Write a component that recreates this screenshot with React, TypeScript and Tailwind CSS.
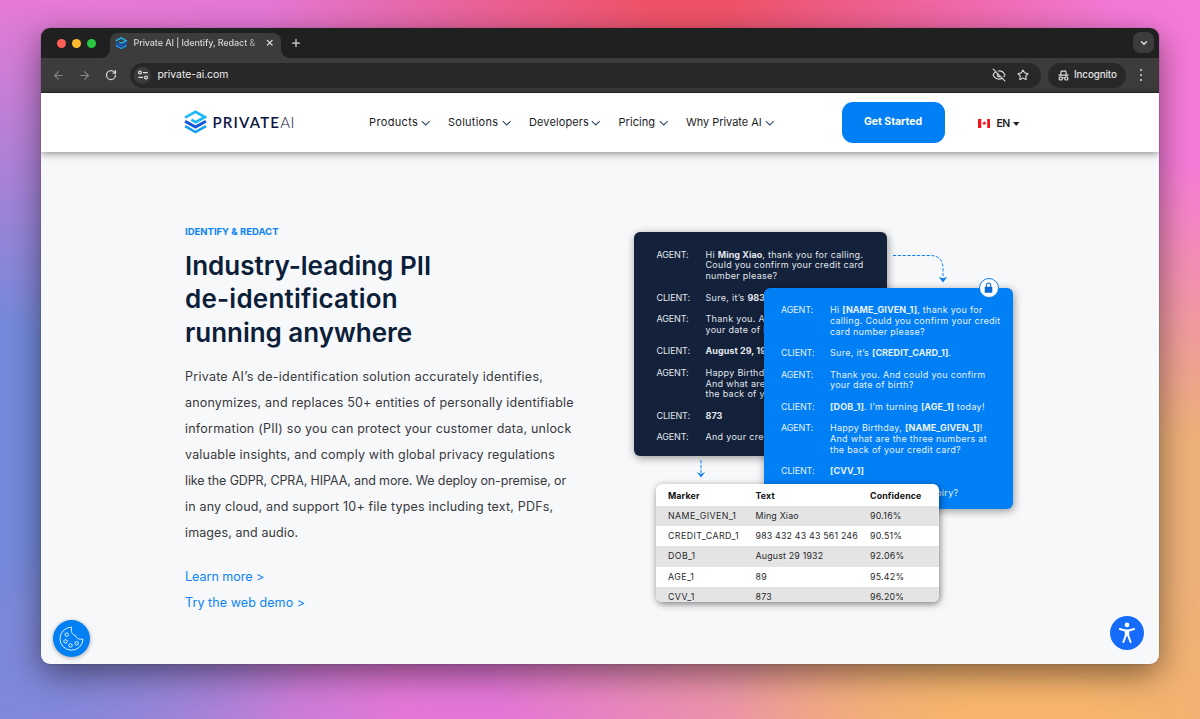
import type { ReactNode } from "react";
import { ArrowLeft, ArrowRight, ChevronDown, Plus, RotateCw, Star, X, EyeOff } from "lucide-react";
import clsx from "clsx";

const navItems = [
  { label: "Products", width: "w-[61px]", tracking: "tracking-[0.35px]" },
  { label: "Solutions", width: "w-[63px]", tracking: "tracking-[0.25px]" },
  { label: "Developers", width: "w-[71.5px]", tracking: "tracking-[0.1px]" },
  { label: "Pricing", width: "w-[49.5px]", tracking: "tracking-[0.05px]" },
  { label: "Why Private AI", width: "w-[88px]", tracking: "tracking-[-0.05px]" },
];

const headingLines = [
  { text: "Industry-leading PII", tracking: "tracking-[0px]" },
  { text: "de-identification", tracking: "tracking-[0.22px]" },
  { text: "running anywhere", tracking: "tracking-[-0.03px]" },
];

const bodyLines = [
  { text: "Private AI’s de-identification solution accurately identifies,", tracking: "tracking-[0.25px]" },
  { text: "anonymizes, and replaces 50+ entities of personally identifiable", tracking: "tracking-[0.19px]" },
  { text: "information (PII) so you can protect your customer data, unlock", tracking: "tracking-[0.22px]" },
  { text: "valuable insights, and comply with global privacy regulations", tracking: "tracking-[0.19px]" },
  { text: "like the GDPR, CPRA, HIPAA, and more. We deploy on-premise, or", tracking: "tracking-[-0.12px]" },
  { text: "in any cloud, and support 10+ file types including text, PDFs,", tracking: "tracking-[0.18px]" },
  { text: "images, and audio.", tracking: "tracking-[0.1px]" },
];

type Message = { from: string; lines: ReactNode[] };

const originalChat: Message[] = [
  {
    from: "AGENT:",
    lines: [
      <>Hi <b>Ming Xiao</b>, thank you for calling.</>,
      "Could you confirm your credit card",
      "number please?",
    ],
  },
  { from: "CLIENT:", lines: [<>Sure, it’s <b>983</b></>] },
  { from: "AGENT:", lines: ["Thank you. And", "your date of birth?"] },
  { from: "CLIENT:", lines: [<b>August 29, 1932</b>] },
  {
    from: "AGENT:",
    lines: ["Happy Birthday", "And what are", "the back of your"],
  },
  { from: "CLIENT:", lines: [<b>873</b>] },
  { from: "AGENT:", lines: ["And your credit"] },
];

const redactedChat: Message[] = [
  {
    from: "AGENT:",
    lines: [
      <>Hi <b>[NAME_GIVEN_1]</b>, thank you for</>,
      "calling. Could you confirm your credit",
      "card number please?",
    ],
  },
  { from: "CLIENT:", lines: [<>Sure, it’s <b>[CREDIT_CARD_1]</b>.</>] },
  { from: "AGENT:", lines: ["Thank you. And could you confirm", "your date of birth?"] },
  { from: "CLIENT:", lines: [<><b>[DOB_1]</b>. I’m turning <b>[AGE_1]</b> today!</>] },
  {
    from: "AGENT:",
    lines: [
      <>Happy Birthday, <b>[NAME_GIVEN_1]</b>!</>,
      "And what are the three numbers at",
      "the back of your credit card?",
    ],
  },
  { from: "CLIENT:", lines: [<b>[CVV_1]</b>] },
  { from: "AGENT:", lines: ["And your credit card expiry?"] },
];

const entities = [
  ["NAME_GIVEN_1", "Ming Xiao", "90.16%"],
  ["CREDIT_CARD_1", "983 432 43 43 561 246", "90.51%"],
  ["DOB_1", "August 29 1932", "92.06%"],
  ["AGE_1", "89", "95.42%"],
  ["CVV_1", "873", "96.20%"],
];

const LogoMark = ({ className }: { className?: string }) => (
  <svg viewBox="0 0 22 24" fill="none" className={className}>
    <path d="M0.6 7.6 L11 1.7 L20.4 7 L11.2 12.1 L6.9 9.6" stroke="#1cb8f6" strokeWidth="2.7" />
    <path d="M0.6 11.2 L11 17.1 L21.4 11.2" stroke="#1355d8" strokeWidth="3" />
    <path d="M0.6 16.2 L11 22.1 L21.4 16.2" stroke="#159df5" strokeWidth="2.6" />
  </svg>
);

const TabStrip = () => (
  <div className="flex h-[30px] items-end bg-[#1f2120] pl-[16px] pr-[5px]">
    <div className="flex gap-[6px] pb-[10.5px]">
      <span className="size-[9px] rounded-full bg-[#ff5f57]" />
      <span className="size-[9px] rounded-full bg-[#febc2e]" />
      <span className="size-[9px] rounded-full bg-[#28c840]" />
    </div>
    <div className="relative ml-[14px] flex h-[25px] w-[171px] items-center rounded-t-[8px] bg-[#3c3c3c] pb-[5px] pl-[5px]">
      <span className="absolute -left-[8px] bottom-0 size-[8px] bg-[radial-gradient(circle_at_0_0,#1f2120_7.5px,#3c3c3c_8px)]" />
      <span className="absolute -right-[8px] bottom-0 size-[8px] bg-[radial-gradient(circle_at_100%_0,#1f2120_7.5px,#3c3c3c_8px)]" />
      <LogoMark className="h-[12.5px] w-[12.5px]" />
      <span className="ml-[6px] w-[124px] bg-[linear-gradient(90deg,#dfe1e0_88%,#777_100%)] bg-clip-text text-[9px] font-medium tracking-[-0.1px] whitespace-nowrap text-transparent">
        Private AI | Identify, Redact &amp;
      </span>
      <X className="ml-[7px] size-[9.5px] text-[#e3e3e3]" strokeWidth={3} />
    </div>
    <Plus className="mb-[9.5px] ml-[9px] size-[12px] text-[#d8d8d8]" strokeWidth={2.5} />
    <div className="mb-[5px] ml-auto flex size-[21px] items-center justify-center rounded-[7px] bg-[#3c3c3c]">
      <ChevronDown className="size-[10px] text-[#e8e8e8]" strokeWidth={3} />
    </div>
  </div>
);

const Toolbar = () => (
  <div className="flex h-[35px] items-center border-b border-[#2a2a2a] bg-[#3c3c3c] pr-[9px] pl-[10.5px] text-[#d6d6d6]">
    <ArrowLeft className="size-[13px] text-[#868686]" strokeWidth={2} />
    <ArrowRight className="ml-[13.5px] size-[13px] text-[#868686]" strokeWidth={2} />
    <RotateCw className="ml-[14px] size-[12px]" strokeWidth={2.5} />
    <div className="ml-[13px] flex h-[25px] w-[910.5px] items-center rounded-full bg-[#282828] pr-[11.5px] pl-[4px]">
      <span className="flex size-[17px] items-center justify-center rounded-full bg-[#3c3c3c]">
        <svg viewBox="0 0 10 10" fill="none" stroke="#e0e0e0" strokeWidth="1.2" className="size-[10px]">
          <circle cx="2" cy="2.6" r="1.4" />
          <path d="M5 2.6h4.6M0.4 7.4H5" />
          <circle cx="8" cy="7.4" r="1.4" />
        </svg>
      </span>
      <span className="ml-[6.5px] text-[10.4px] tracking-[-0.04px] text-[#eeeeee]">private-ai.com</span>
      <EyeOff className="ml-auto size-[14px]" strokeWidth={2} />
      <Star className="ml-[11px] size-[12px]" strokeWidth={2.3} />
    </div>
    <div className="ml-[7px] flex h-[25px] w-[78px] items-center rounded-full bg-[#282828] pl-[10px]">
      <svg viewBox="0 0 11 11" fill="none" stroke="#e0e0e0" strokeWidth="1.2" className="size-[11px]">
        <path d="M0.4 5.2h10.2M2.6 5 3.3 1.2h4.4L8.4 5M4.2 8.2q1.3-.9 2.6 0" />
        <circle cx="2.7" cy="8.4" r="1.6" />
        <circle cx="8.3" cy="8.4" r="1.6" />
      </svg>
      <span className="ml-[5.5px] text-[9.8px] font-medium tracking-[-0.1px] text-[#e3e3e3]">Incognito</span>
    </div>
    <div className="ml-[14.5px] flex flex-col gap-[2.6px]">
      <span className="size-[2px] rounded-full bg-[#d6d6d6]" />
      <span className="size-[2px] rounded-full bg-[#d6d6d6]" />
      <span className="size-[2px] rounded-full bg-[#d6d6d6]" />
    </div>
  </div>
);

const Header = () => (
  <header className="relative z-10 flex h-[59px] items-center bg-white pl-[143px] shadow-[0_1px_8px_rgba(0,0,0,0.5)]">
    <LogoMark className="mb-px h-[24px] w-[23px]" />
    <div className="ml-[5.5px] w-[86px] font-['Lato'] text-[15px] leading-none whitespace-nowrap text-[#0a1440]">
      <span className="font-semibold tracking-[1.2px]">PRIVATE</span>
      <span className="font-light tracking-[0.6px]">AI</span>
    </div>
    <nav className="ml-[70.5px] flex gap-[18px]">
      {navItems.map((item) => (
        <a key={item.label} className={clsx("flex items-center justify-between text-[11px] whitespace-nowrap text-[#1b1b1f]", item.width, item.tracking)}>
          {item.label}
          <svg viewBox="0 0 10 6" fill="none" stroke="#2f4a66" strokeWidth="1.1" className="h-[6px] w-[9.5px]">
            <path d="M0.8 0.9 5 5 9.2 0.9" />
          </svg>
        </a>
      ))}
    </nav>
    <button className="mb-px ml-[67.5px] h-[41px] w-[103px] rounded-[11px] bg-[#017ff5] text-[10.5px] font-bold tracking-[-0.02px] text-white">
      Get Started
    </button>
    <div className="ml-[33px] flex items-center pt-[2px] text-[10.5px] font-semibold text-[#222]">
      <svg viewBox="0 0 13 9" preserveAspectRatio="none" className="h-[9.5px] w-[12.5px]">
        <path fill="#fff" d="M0 0h13v9H0z" />
        <path fill="#f5131b" d="M0 0h3.4v9H0zM9.6 0H13v9H9.6zM6.5 2l.8 1.3 1.2.3-.6 1.2-1.1.7h-.6l-1.1-.7-.6-1.2 1.2-.3z" />
      </svg>
      <span className="ml-[6.5px] w-[13.5px] tracking-[-0.5px]">EN</span>
      <svg viewBox="0 0 8 5" className="ml-[3px] h-[4px] w-[6.5px]">
        <path fill="#222" d="M0 0h8L4 5z" />
      </svg>
    </div>
  </header>
);

const ChatCard = ({ messages, className }: { messages: Message[]; className?: string }) => (
  <div className={clsx("absolute flex flex-col gap-[10.75px] overflow-hidden rounded-[6px] text-[9px] leading-[10.75px] tracking-[0.29px] whitespace-nowrap shadow-[1px_2px_8px_rgba(0,0,0,0.4)] [&_b]:tracking-[0.05px]", className)}>
    {messages.map((message, i) => (
      <div key={i} className="flex">
        <span className="w-[49px] shrink-0 tracking-[-0.15px]">{message.from}</span>
        <div>
          {message.lines.map((line, j) => (
            <p key={j}>{line}</p>
          ))}
        </div>
      </div>
    ))}
  </div>
);

const EntityTable = () => (
  <div className="absolute top-[252px] left-[22px] h-[118px] w-[283px] overflow-hidden rounded-[6px] bg-white text-[8.8px] whitespace-nowrap text-[#26282b] shadow-[1px_2px_7px_rgba(0,0,0,0.5)]">
    <div className="grid h-[22px] grid-cols-[87.5px_114.5px_1fr] items-center pt-px pl-[12px] font-bold tracking-[0.15px] text-[#111]">
      <span>Marker</span>
      <span>Text</span>
      <span>Confidence</span>
    </div>
    {entities.map(([marker, text, confidence], i) => (
      <div
        key={marker}
        className={clsx("grid h-[20.2px] grid-cols-[87.5px_114.5px_1fr] items-center pb-[1px] pl-[12px]", i % 2 === 0 && "bg-[#e4e4e4]")}
      >
        <span className="tracking-[0.42px]">{marker}</span>
        <span className="tracking-[0.2px]">{text}</span>
        <span className="tracking-[0.25px]">{confidence}</span>
      </div>
    ))}
  </div>
);

const Illustration = () => (
  <div className="relative mt-[80px] ml-[60px] h-[372px] w-[380px]">
    <ChatCard messages={originalChat} className="top-0 left-0 h-[224px] w-[253px] bg-[#13213a] pt-[17.5px] pl-[22.5px] text-[#e2e6ec]" />
    <svg viewBox="0 0 60 32" fill="none" className="absolute top-[20px] left-[256.5px] h-[32px] w-[60px]">
      <path d="M2 3.5H40Q52 4 52 17V25" stroke="#0c7ff2" strokeDasharray="3.2 1.6" />
      <path d="M47.8 25 52 26.2 56.2 25 52 30.6z" fill="#0c7ff2" />
    </svg>
    <ChatCard messages={redactedChat} className="top-[56px] left-[129.5px] h-[221px] w-[249.5px] bg-[#017ff5] pt-[17px] pl-[17.5px] text-[#e4f1ff]" />
    <span className="absolute top-[46px] left-[344.5px] flex size-[20px] items-center justify-center rounded-full border-[1.5px] border-[#0c7ff2] bg-white">
      <svg viewBox="0 0 10 12" fill="none" className="h-[11.5px] w-[9px]">
        <rect x="0.8" y="5" width="8.4" height="6.6" rx="0.6" fill="#0768d8" />
        <path d="M2.6 5.2V3.2a2.4 2.4 0 0 1 4.8 0v2" stroke="#0768d8" strokeWidth="1.2" />
      </svg>
    </span>
    <svg viewBox="0 0 10 18" fill="none" className="absolute top-[228px] left-[62px] h-[18px] w-[10px]">
      <path d="M5 0v15" stroke="#0c7ff2" strokeDasharray="3.4 1.4" />
      <path d="M0.8 12 5 14 9.2 12 5 17.6z" fill="#0c7ff2" />
    </svg>
    <EntityTable />
  </div>
);

const Hero = () => (
  <section className="relative flex flex-1 bg-[#f7f8fa] pl-[144px]">
    <div className="w-[389px] pt-[72px] whitespace-nowrap">
      <p className="pt-[0.6px] text-[9.5px] leading-[14px] font-bold text-[#0c84f5]">IDENTIFY &amp; REDACT</p>
      <h1 className="mt-[10.4px] text-[26px] leading-[33.3px] font-semibold text-[#0b2038]">
        {headingLines.map((line) => (
          <span key={line.text} className={clsx("block", line.tracking)}>{line.text}</span>
        ))}
      </h1>
      <p className="mt-[15.1px] text-[12.5px] leading-[26px] text-[#37393c]">
        {bodyLines.map((line) => (
          <span key={line.text} className={clsx("block", line.tracking)}>{line.text}</span>
        ))}
      </p>
      <div className="mt-[18px] flex flex-col text-[12.5px] leading-[26px] text-[#0c84f5]">
        <a>Learn more &gt;</a>
        <a className="tracking-[0.08px]">Try the web demo &gt;</a>
      </div>
    </div>
    <Illustration />
    <button className="absolute bottom-[7.5px] left-[11.5px] flex size-[37px] items-center justify-center rounded-full bg-[#017ff5] shadow-[0_1px_4px_rgba(0,0,0,0.35)]">
      <svg viewBox="0 0 26 26" fill="none" stroke="#fff" strokeWidth="0.9" className="size-[25px]">
        <path d="M13.2 1.2A12 12 0 1 0 25 13.6C20 14.4 17.6 12.4 17.2 9.8 13.6 9.4 12 5.4 13.2 1.2z" />
        <circle cx="8" cy="9" r="1.8" />
        <circle cx="6.8" cy="16" r="1.8" />
        <circle cx="12" cy="20.2" r="1.8" />
        <circle cx="18.4" cy="18" r="1.8" />
      </svg>
    </button>
    <button className="absolute right-[15.5px] bottom-[14.5px] flex size-[33.5px] items-center justify-center rounded-full bg-[#156bfa]">
      <svg viewBox="0 0 20 24" fill="none" stroke="#fff" strokeWidth="2.2" strokeLinecap="round" strokeLinejoin="round" className="h-[22px] w-[18px]">
        <circle cx="10" cy="3" r="2.6" fill="#fff" stroke="none" />
        <path d="M2 7.6 8 9.2H12L18 7.6" />
        <path d="M8.6 9.5V15L6 22M11.4 9.5V15L14 22" />
        <path d="M10 9.5V14.5" />
      </svg>
    </button>
  </section>
);

const App = () => {
  return (
    <div className="h-[719px] w-[1200px] overflow-hidden bg-[#e97ad6] bg-[radial-gradient(ellipse_430px_200px_at_690px_0px,#ef5268_10%,#ef526800_100%),radial-gradient(ellipse_300px_160px_at_1030px_719px,#f8b46c_20%,#f8b46c00_100%),radial-gradient(ellipse_360px_440px_at_0px_440px,#7389da_25%,#7389da00_100%),radial-gradient(ellipse_400px_330px_at_0px_719px,#9086da_15%,#9086da00_100%),radial-gradient(ellipse_720px_450px_at_1200px_610px,#edb078_38%,#edb07800_100%),linear-gradient(90deg,#e67ad4,#e276d6_40%,#f67ad8)] pt-[28px] pl-[41px] font-['Inter',sans-serif]">
      <div className="flex h-[636px] w-[1118px] flex-col overflow-hidden rounded-[9px] shadow-[0_0_1px_rgba(0,0,0,0.6),0_10px_32px_rgba(0,0,0,0.48)]">
        <TabStrip />
        <Toolbar />
        <Header />
        <Hero />
      </div>
    </div>
  );
};

export default App;
